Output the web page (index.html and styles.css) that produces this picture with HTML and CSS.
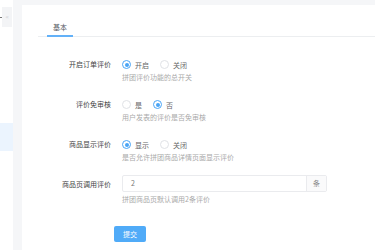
FILE: index.html
```html
<!DOCTYPE html>
<html lang="zh">
<head>
<meta charset="utf-8">
<link rel="stylesheet" href="styles.css">
</head>
<body>
<div class="layout">
  <aside class="sidebar">
    <div class="side-top">
      <span class="side-mark"></span>
      <span class="collapse">«</span>
    </div>
    <div class="side-active"></div>
  </aside>
  <main class="main">
    <section class="card">
      <div class="tabs">
        <div class="tab active">基本</div>
      </div>
      <form class="form">
        <div class="row">
          <div class="label">开启订单评价</div>
          <div class="field">
            <div class="control">
              <span class="opt"><span class="radio on"></span>开启</span>
              <span class="opt"><span class="radio"></span>关闭</span>
            </div>
            <div class="help">拼团评价功能的总开关</div>
          </div>
        </div>
        <div class="row">
          <div class="label">评价免审核</div>
          <div class="field">
            <div class="control">
              <span class="opt"><span class="radio"></span>是</span>
              <span class="opt"><span class="radio on"></span>否</span>
            </div>
            <div class="help">用户发表的评价是否免审核</div>
          </div>
        </div>
        <div class="row">
          <div class="label">商品显示评价</div>
          <div class="field">
            <div class="control">
              <span class="opt"><span class="radio on"></span>显示</span>
              <span class="opt"><span class="radio"></span>关闭</span>
            </div>
            <div class="help">是否允许拼团商品详情页面显示评价</div>
          </div>
        </div>
        <div class="row">
          <div class="label">商品页调用评价</div>
          <div class="field">
            <div class="input-group">
              <span class="input-value">2</span>
              <span class="suffix">条</span>
            </div>
            <div class="help help-input">拼团商品页默认调用2条评价</div>
          </div>
        </div>
        <div class="actions">
          <button type="button" class="btn">提交</button>
        </div>
      </form>
    </section>
  </main>
</div>
</body>
</html>
```

FILE: styles.css
```css
* { box-sizing: border-box; }
html, body {
  margin: 0;
  padding: 0;
  width: 375px;
  height: 250px;
  overflow: hidden;
  background: #f5f6f8;
  font-family: "Noto Sans CJK SC", "Noto Sans", sans-serif;
  font-size: 7px;
  color: #333;
}
.layout {
  display: flex;
  height: 250px;
}
.sidebar {
  width: 13px;
  flex: none;
  background: #fff;
  position: relative;
}
.side-top {
  display: flex;
  align-items: center;
  height: 20px;
  margin-top: 7px;
}
.side-mark {
  width: 2px;
  height: 1px;
  background: #777;
}
.collapse {
  width: 10px;
  height: 20px;
  background: #f3f4f6;
  color: #c8cbd0;
  font-family: "DejaVu Sans", sans-serif;
  font-size: 6px;
  line-height: 20px;
  text-align: center;
}
.side-active {
  margin-top: 96px;
  height: 28px;
  background: #ebf4fe;
}
.main {
  flex: 1;
  padding: 5px 0 0 9px;
}
.card {
  background: #fff;
  height: 245px;
  padding-left: 16px;
}
.tabs {
  display: flex;
  height: 32px;
  border-bottom: 1px solid #eceef0;
}
.tab {
  position: relative;
  margin-left: 9px;
  padding: 17px 6px 0;
  line-height: 10px;
  color: #555a63;
}
.tab.active::after {
  content: "";
  position: absolute;
  left: 0;
  right: 0;
  bottom: -1px;
  height: 2px;
  background: #63b1f8;
}
.form {
  padding-top: 19px;
}
.row {
  display: flex;
  margin-bottom: 14px;
}
.label {
  width: 84px;
  padding-right: 11px;
  text-align: right;
  line-height: 17px;
  color: #444;
}
.field {
  display: flex;
  flex-direction: column;
}
.control {
  display: flex;
  align-items: center;
  height: 17px;
  color: #666;
}
.opt {
  display: flex;
  align-items: center;
  margin-right: 11px;
}
.radio {
  width: 9px;
  height: 9px;
  border: 1px solid #e0e2e6;
  border-radius: 50%;
  margin-right: 4px;
  position: relative;
  background: #fff;
}
.radio.on {
  border-color: #4aa5f6;
}
.radio.on::after {
  content: "";
  position: absolute;
  left: 1.5px;
  top: 1.5px;
  width: 4px;
  height: 4px;
  border-radius: 50%;
  background: #4aa5f6;
}
.help {
  line-height: 9px;
  color: #aaa;
}
.help-input {
  margin-top: 3px;
}
.input-group {
  display: flex;
  width: 205px;
  height: 17px;
  border: 1px solid #eaebee;
  border-radius: 2px;
  margin-top: -1px;
}
.input-value {
  flex: 1;
  padding-left: 8px;
  line-height: 15px;
  color: #777;
}
.suffix {
  width: 20px;
  background: #fafafb;
  border-left: 1px solid #eaebee;
  text-align: center;
  line-height: 15px;
  color: #888;
}
.actions {
  padding-left: 76px;
  padding-top: 8px;
}
.btn {
  width: 32px;
  height: 16px;
  border: 0;
  border-radius: 2px;
  background: #50abf8;
  color: #fff;
  font-family: "Noto Sans CJK SC", sans-serif;
  font-size: 7px;
  line-height: 16px;
  padding: 0;
}
```
